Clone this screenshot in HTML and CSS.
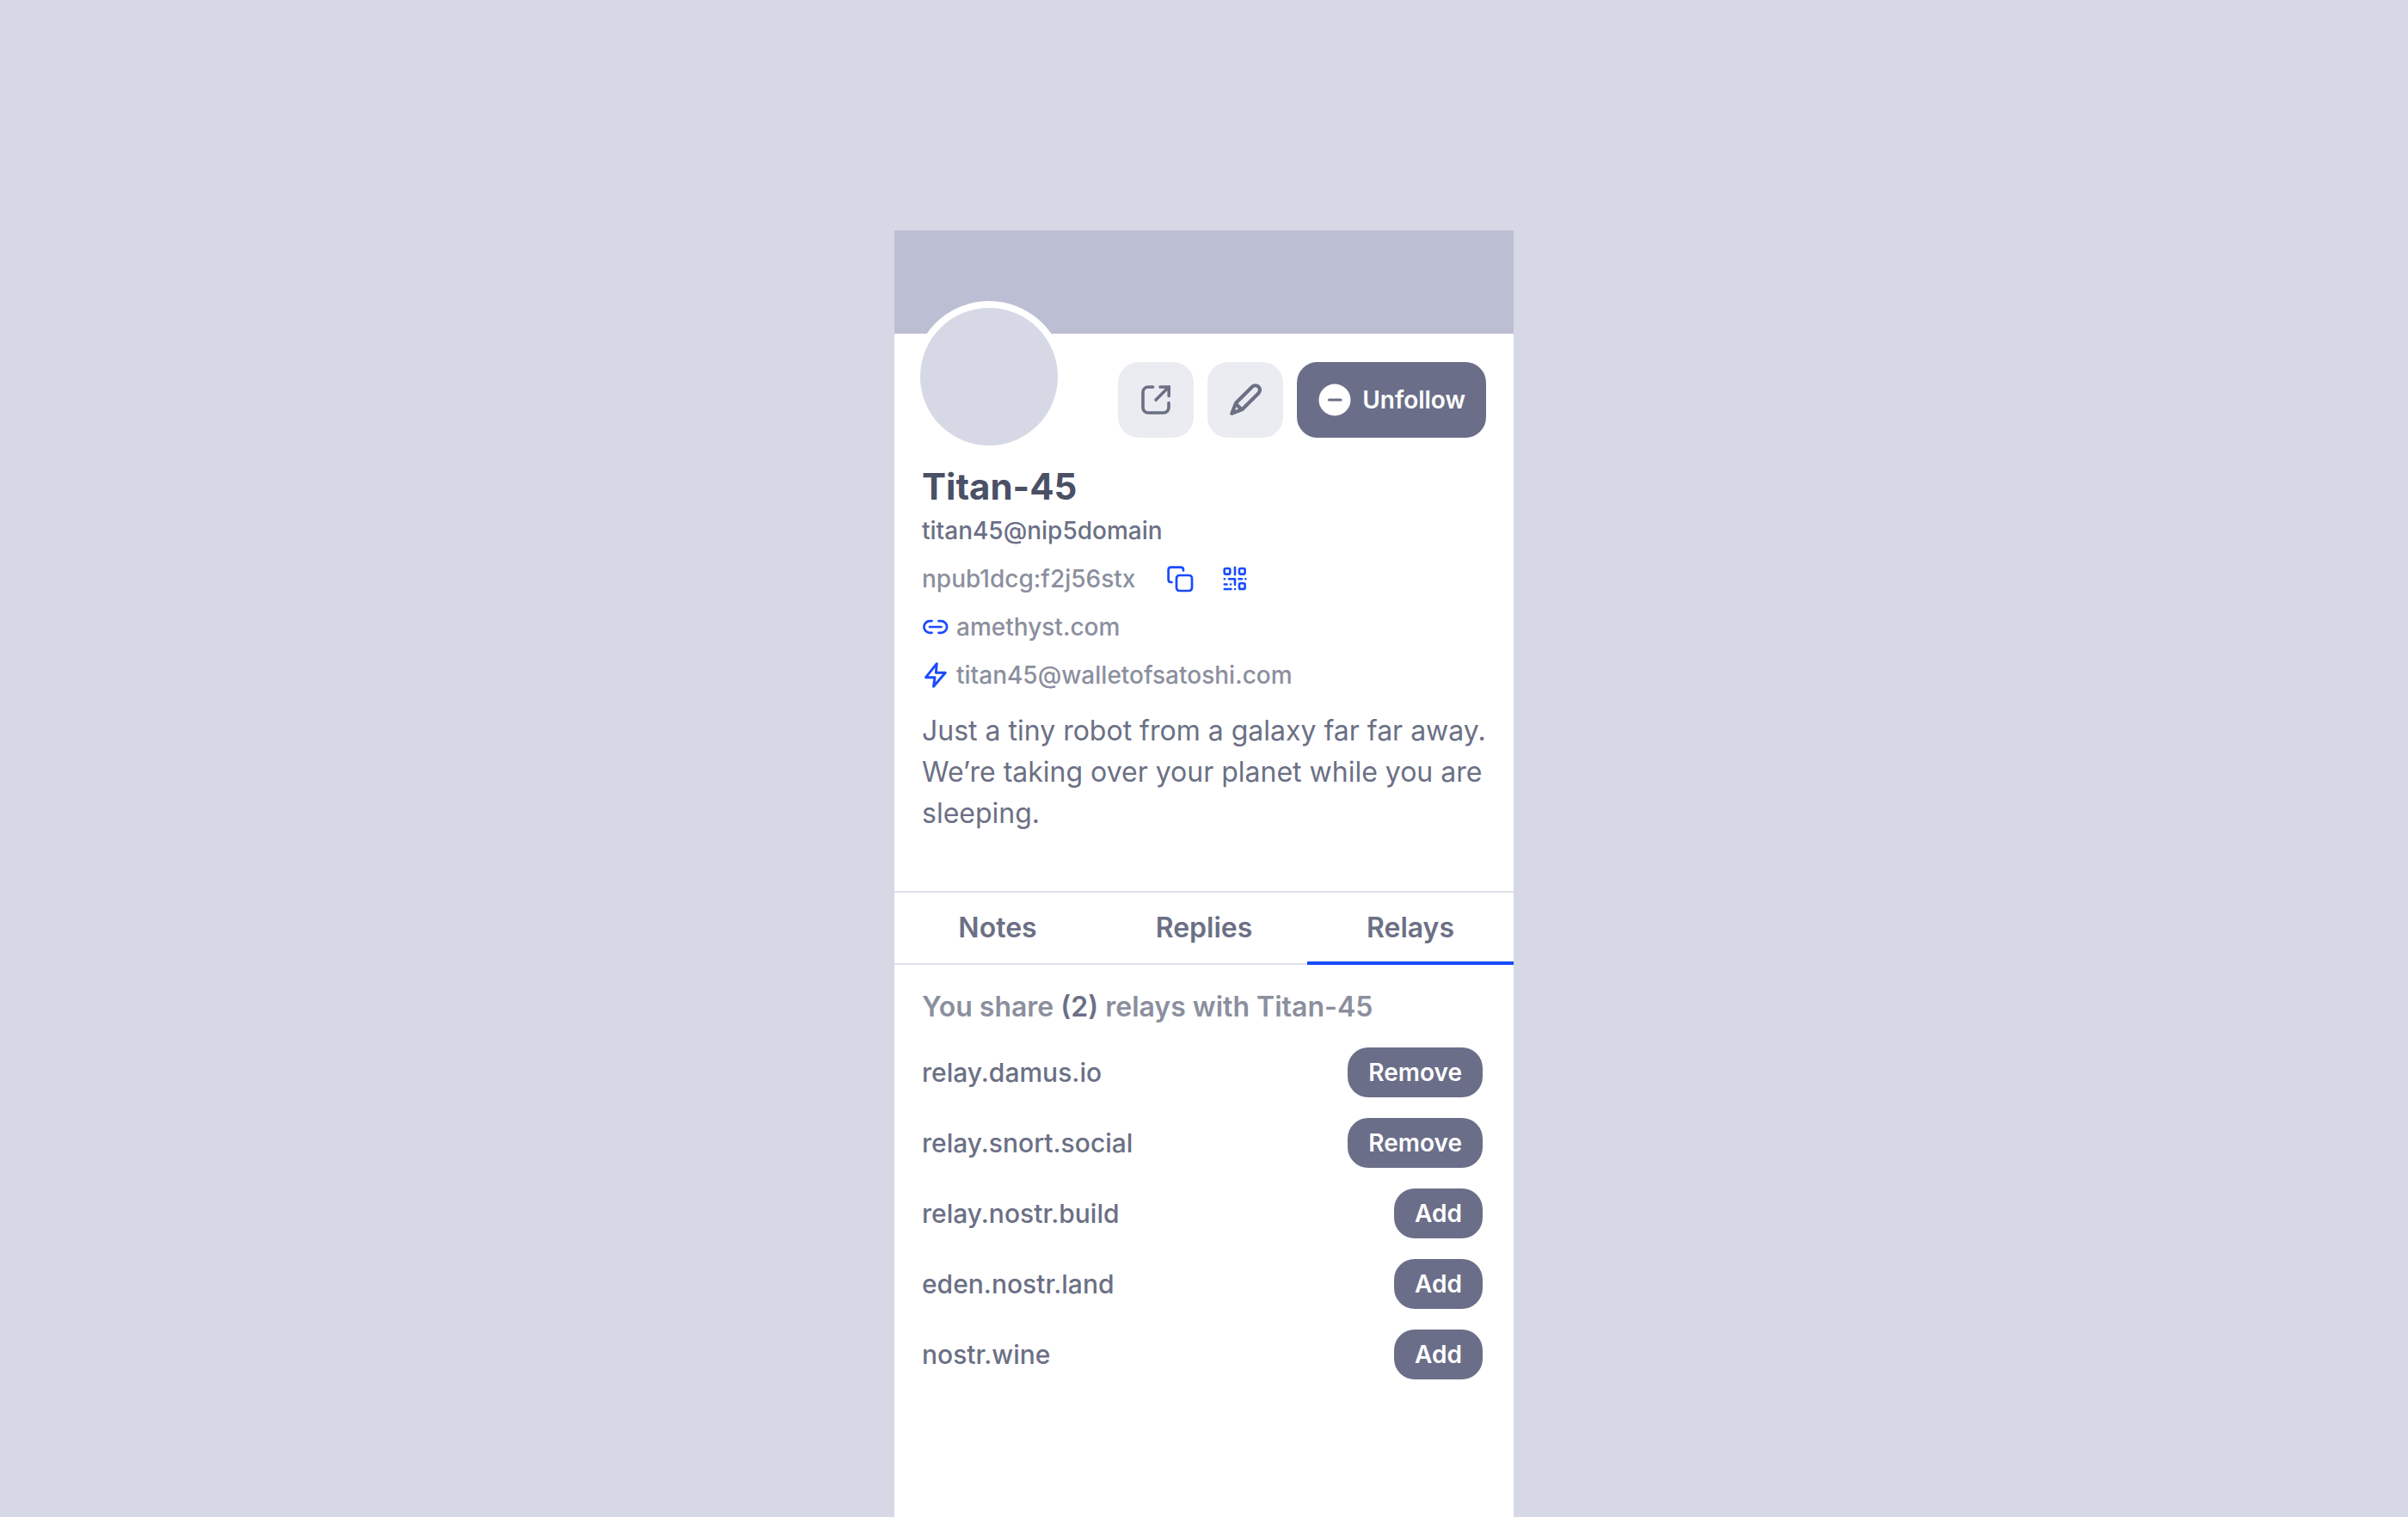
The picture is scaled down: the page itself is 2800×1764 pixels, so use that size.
FILE: index.html
```html
<!DOCTYPE html>
<html lang="en">
<head>
<meta charset="utf-8">
<meta name="viewport" content="width=device-width, initial-scale=1">
<title>Titan-45</title>
<link rel="stylesheet" href="styles.css">
</head>
<body>
<main class="card">
  <div class="banner"></div>
  <section class="profile">
    <div class="profile-top">
      <div class="avatar"></div>
      <div class="actions">
        <button class="icon-button" type="button" aria-label="Share profile">
          <svg class="icon-lg" viewBox="0 0 40 40" fill="none" stroke="currentColor" stroke-width="3.6" stroke-linecap="round"><path d="M16.6 5H11a6 6 0 0 0-6 6v18a6 6 0 0 0 6 6h18a6 6 0 0 0 6-6v-5.5M25 5h10.200v10.500M20 20L35 5"/></svg>
        </button>
        <button class="icon-button" type="button" aria-label="Edit">
          <svg class="icon-lg" viewBox="0 0 40 40" fill="none" stroke="currentColor" stroke-width="4.200" stroke-linecap="round" stroke-linejoin="round"><path d="M28 4.800L9.200 23.500L4.300 35.800L16.500 31L35.400 12.200A5.200 5.200 0 0 0 28 4.800ZM9.500 25L15 30.500"/></svg>
        </button>
        <button class="follow-button" type="button">
          <svg class="icon-lg" viewBox="0 0 40 40"><circle cx="20" cy="20" r="18.500" fill="#fff"/><path d="M13.500 20h13.400" stroke="#6b6e89" stroke-width="3.200" stroke-linecap="round"/></svg>
          Unfollow
        </button>
      </div>
    </div>
    <h1 class="name">Titan-45</h1>
    <p class="row row-strong">titan45@nip5domain</p>
    <div class="row">
      <span>npub1dcg:f2j56stx</span>
      <span class="tools">
        <button class="tool" type="button" aria-label="Copy key">
          <svg class="icon" viewBox="0 0 32 32" fill="none" stroke="currentColor" stroke-width="2.700" stroke-linecap="round" stroke-linejoin="round"><rect x="12" y="12" width="18" height="18" rx="3.500"/><path d="M6.500 20H5.500A3 3 0 0 1 2.600 17V5.500A3 3 0 0 1 5.500 2.600H17A3 3 0 0 1 20 5.500V6.500"/></svg>
        </button>
        <button class="tool" type="button" aria-label="Show QR code">
          <svg class="icon" viewBox="0 0 32 32" fill="none" stroke="currentColor" stroke-width="2.600" stroke-linecap="round" stroke-linejoin="round"><rect x="3.700" y="4" width="6.600" height="6.600" rx="1.500"/><rect x="21" y="4" width="6.600" height="6.600" rx="1.500"/><rect x="21" y="21.300" width="6.600" height="6.600" rx="1.500"/><path d="M16 2.800V11.200M3.800 16.300h.1M9 16.300H16V23M20.500 16.300H24M28.300 16.300h.1M3.800 22.500H6.500M11 22.500h.1M3.800 28H11.500M16 28h.1"/></svg>
        </button>
      </span>
    </div>
    <div class="row">
      <svg class="icon accent" viewBox="0 0 32 32" fill="none" stroke="currentColor" stroke-width="2.700" stroke-linecap="round"><path d="M11.500 9.200H9.200a6.800 6.800 0 0 0 0 13.600H11.500M19.500 9.200h2.800a6.800 6.800 0 0 1 0 13.600H19.500M9 16H22.500"/></svg>
      <a class="link" href="#">amethyst.com</a>
    </div>
    <div class="row">
      <svg class="icon accent" viewBox="0 0 32 32" fill="none" stroke="currentColor" stroke-width="2.900" stroke-linejoin="round"><path d="M17.300 2.700L4.500 18.700H15L13.500 29.300L27.300 13.300H16.300Z"/></svg>
      <a class="link" href="#">titan45@walletofsatoshi.com</a>
    </div>
    <p class="bio">Just a tiny robot from a galaxy far far away. We’re taking over your planet while you are sleeping.</p>
  </section>
  <nav class="tabs">
    <a class="tab" href="#">Notes</a>
    <a class="tab" href="#">Replies</a>
    <a class="tab tab-active" href="#" aria-current="page">Relays</a>
  </nav>
  <section class="relays">
    <h2 class="relays-title">You share <span class="count">(2)</span> relays with Titan-45</h2>
    <ul class="relay-list">
      <li class="relay">relay.damus.io <button class="pill" type="button">Remove</button></li>
      <li class="relay">relay.snort.social <button class="pill" type="button">Remove</button></li>
      <li class="relay">relay.nostr.build <button class="pill" type="button">Add</button></li>
      <li class="relay">eden.nostr.land <button class="pill" type="button">Add</button></li>
      <li class="relay">nostr.wine <button class="pill" type="button">Add</button></li>
    </ul>
  </section>
</main>
</body>
</html>
```

FILE: styles.css
```css
*,
*::before,
*::after {
  box-sizing: border-box;
}

body {
  display: flex;
  justify-content: center;
  min-height: 100vh;
  margin: 0;
  padding-top: 268px;
  background: #d6d8e5;
  color: #6b7085;
  font-family: Inter, "Liberation Sans", sans-serif;
  font-size: 28px;
}

h1, h2, p, ul {
  margin: 0;
  padding: 0;
}

button {
  border: 0;
  padding: 0;
  font: inherit;
  cursor: pointer;
}

svg {
  display: block;
  flex: none;
}

.card {
  width: 100%;
  max-width: 720px;
  background: #fff;
}

.banner {
  height: 120px;
  background: #bcbed3;
}

.profile {
  padding: 0 32px 66px;
}

.profile-top {
  display: flex;
  justify-content: space-between;
  align-items: flex-start;
  height: 152px;
}

.avatar {
  width: 176px;
  height: 176px;
  margin: -38px 0 0 -10px;
  border: 8px solid #fff;
  border-radius: 50%;
  background: #d6d8e5;
}

.actions {
  display: flex;
  gap: 16px;
  padding-top: 33px;
}

.icon-button,
.follow-button {
  display: flex;
  align-items: center;
  justify-content: center;
  height: 88px;
  border-radius: 24px;
}

.icon-button {
  width: 88px;
  background: #ebecf1;
  color: #6b7085;
}

.follow-button {
  gap: 12px;
  padding: 0 24px;
  background: #6b6e89;
  color: #fff;
  font-weight: 600;
}

.icon-lg {
  width: 40px;
  height: 40px;
}

.icon {
  width: 32px;
  height: 32px;
}

.name {
  padding-top: 3px;
  color: #4a5066;
  font-size: 42px;
  font-weight: 700;
  line-height: 46px;
}

.row {
  display: flex;
  align-items: center;
  gap: 8px;
  height: 56px;
  color: #8b8f9e;
  font-weight: 500;
}

.row-strong {
  color: #6b7085;
}

.tools {
  display: flex;
  gap: 32px;
  margin-left: 28px;
}

.tool {
  background: none;
  color: #1a4bff;
}

.accent {
  color: #1a4bff;
}

.link {
  color: inherit;
  text-decoration: none;
}

.bio {
  margin-top: 13px;
  font-size: 32px;
  font-weight: 400;
  line-height: 48px;
}

.tabs {
  display: grid;
  grid-template-columns: repeat(3, 1fr);
  border-top: 2px solid #dee1ec;
}

.tab {
  padding: 21px 0;
  border-bottom: 2px solid #dee1ec;
  color: #6b7085;
  font-size: 32px;
  font-weight: 600;
  line-height: 40px;
  text-align: center;
  text-decoration: none;
}

.tab-active {
  padding-bottom: 19px;
  border-bottom: 4px solid #1a4bff;
}

.relays {
  padding: 29px 36px 48px 32px;
}

.relays-title {
  color: #8b8f9e;
  font-size: 32px;
  font-weight: 600;
  line-height: 40px;
}

.count {
  color: #6b7085;
}

.relay-list {
  display: grid;
  gap: 24px;
  margin-top: 27px;
  list-style: none;
}

.relay {
  display: flex;
  align-items: center;
  justify-content: space-between;
  font-size: 30px;
  font-weight: 500;
}

.pill {
  padding: 0 24px;
  border-radius: 24px;
  background: #6b6e89;
  color: #fff;
  font-size: 28px;
  font-weight: 600;
  line-height: 58px;
}
```
